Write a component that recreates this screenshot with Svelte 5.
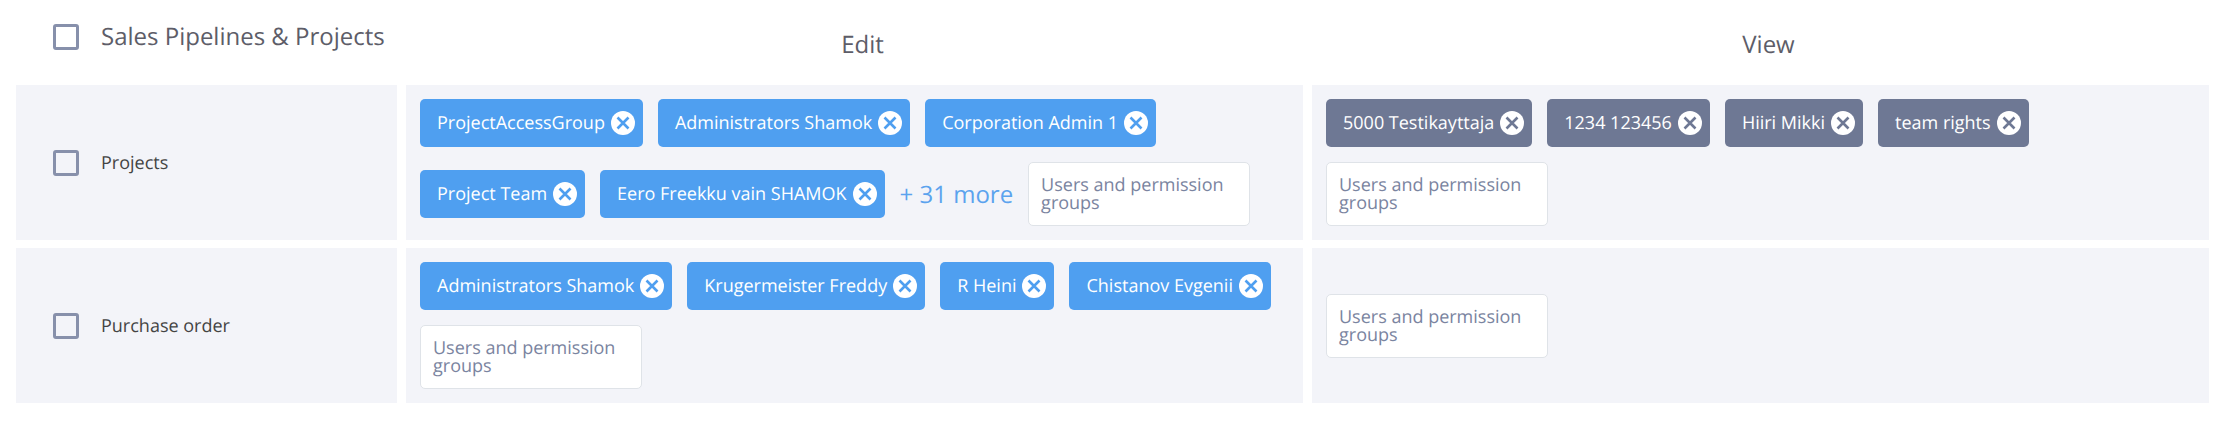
<script lang="ts">
	/**
	 * Access rights matrix: one row per module, with the users and
	 * permission groups that may edit or view it.
	 */

	type Right = 'edit' | 'view';

	interface Row {
		id: string;
		label: string;
		edit: string[];
		view: string[];
		/** Number of edit tags that are collapsed behind the "more" button. */
		hidden: number;
	}

	const rights: Right[] = ['edit', 'view'];

	let rows: Row[] = $state([
		{
			id: 'projects',
			label: 'Projects',
			edit: [
				'ProjectAccessGroup',
				'Administrators Shamok',
				'Corporation Admin 1',
				'Project Team',
				'Eero Freekku vain SHAMOK',
			],
			view: ['5000 Testikayttaja', '1234 123456', 'Hiiri Mikki', 'team rights'],
			hidden: 31,
		},
		{
			id: 'purchase-order',
			label: 'Purchase order',
			edit: [
				'Administrators Shamok',
				'Krugermeister Freddy',
				'R Heini',
				'Chistanov Evgenii',
			],
			view: [],
			hidden: 0,
		},
	]);

	let selected: Record<string, boolean> = $state({});

	let allSelected = $derived(rows.every((row) => selected[row.id]));

	function toggleAll() {
		const next = !allSelected;
		for (const row of rows) selected[row.id] = next;
	}

	function removeTag(row: Row, right: Right, index: number) {
		row[right].splice(index, 1);
	}
</script>

<table class="rights">
	<thead>
		<tr>
			<th class="module" scope="col">
				<label class="check">
					<input type="checkbox" checked={allSelected} onchange={toggleAll} />
					Sales Pipelines &amp; Projects
				</label>
			</th>
			<th scope="col">Edit</th>
			<th scope="col">View</th>
		</tr>
	</thead>
	<tbody>
		{#each rows as row (row.id)}
			<tr>
				<td class="module">
					<label class="check">
						<input type="checkbox" bind:checked={selected[row.id]} />
						{row.label}
					</label>
				</td>
				{#each rights as right}
					<td>
						<div class="tags">
							{#each row[right] as name, i}
								<span class="tag {right}">
									{name}
									<button
										class="remove"
										type="button"
										aria-label="Remove {name}"
										onclick={() => removeTag(row, right, i)}
									>
										<svg viewBox="0 0 24 24" aria-hidden="true">
											<circle cx="12" cy="12" r="12" />
											<path d="M6.5 6.5l11 11M17.5 6.5l-11 11" />
										</svg>
									</button>
								</span>
							{/each}
							{#if right === 'edit' && row.hidden > 0}
								<button class="more" type="button">+ {row.hidden} more</button>
							{/if}
							<textarea
								class="picker"
								rows="2"
								placeholder="Users and permission groups"
								aria-label="{row.label}: {right}"
							></textarea>
						</div>
					</td>
				{/each}
			</tr>
		{/each}
	</tbody>
</table>

<style>
	:global(body) {
		margin: 0;
		padding: 0 7px;
		background: #fff;
		font-family: 'Open Sans', 'Noto Sans', sans-serif;
		font-size: 18px;
		text-rendering: geometricPrecision;
	}

	.rights {
		width: 100%;
		table-layout: fixed;
		border-collapse: separate;
		border-spacing: 9px 8px;
	}

	th {
		height: 69px;
		box-sizing: border-box;
		padding: 4px 0 0 16px;
		font-size: 24px;
		font-weight: 400;
		line-height: 32px;
		color: #5d5d68;
	}

	td {
		padding: 14px;
		background: #f3f4f9;
		color: #444;
	}

	.module {
		width: 381px;
		box-sizing: border-box;
		padding: 0 0 0 37px;
		text-align: left;
	}

	th.module {
		padding-top: 13px;
		vertical-align: top;
	}

	/* ── Checkboxes ── */
	.check {
		display: flex;
		align-items: center;
		gap: 22px;
	}

	.check input {
		appearance: none;
		flex-shrink: 0;
		width: 26px;
		height: 26px;
		margin: 0;
		border: 3px solid #8790ab;
		border-radius: 3px;
		cursor: pointer;
	}

	.check input:checked {
		background: #8790ab;
	}

	/* ── Tags ── */
	.tags {
		display: flex;
		flex-wrap: wrap;
		align-items: center;
		gap: 15px;
	}

	.tag {
		display: flex;
		align-items: center;
		gap: 6px;
		height: 48px;
		box-sizing: border-box;
		padding: 0 8px 0 17px;
		border-radius: 5px;
		color: #fff;
		white-space: nowrap;
	}

	.tag.edit {
		background: #4f9ff0;
		--cross: #4f9ff0;
	}

	.tag.view {
		background: #6e7894;
		--cross: #6e7894;
	}

	.remove,
	.more {
		padding: 0;
		border: none;
		background: none;
		font-family: inherit;
		text-rendering: inherit;
		cursor: pointer;
	}

	.remove svg {
		display: block;
		width: 24px;
		height: 24px;
	}

	.remove circle {
		fill: #fff;
	}

	.remove path {
		fill: none;
		stroke: var(--cross);
		stroke-width: 2.6;
	}

	.more {
		font-size: 24px;
		color: #5ba3ee;
	}

	/* ── User / group input ── */
	.picker {
		width: 222px;
		height: 64px;
		box-sizing: border-box;
		padding: 13px 12px;
		border: 1px solid #dfe3e8;
		border-radius: 5px;
		background: #fff;
		font-family: inherit;
		font-size: 18px;
		line-height: 18px;
		text-rendering: inherit;
		color: #444;
		resize: none;
		overflow: hidden;
	}

	.picker::placeholder {
		color: #7a84a0;
		opacity: 1;
	}
</style>
